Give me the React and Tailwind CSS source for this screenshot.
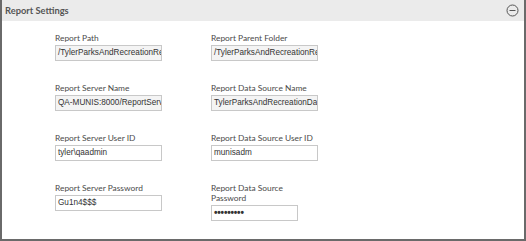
import React from "react";

const Field = ({ label, value, ro, w = "w-[107px]", pw }) => (
  <div className="flex flex-col">
    <div className="text-[8.4px] leading-[10px] text-[#4a4a4a] w-[104px]">{label}</div>
    <div
      className={`mt-[2px] h-[16px] ${w} border border-[#c8c8c8] overflow-hidden whitespace-nowrap px-[2px] text-[8.2px] leading-[14px] text-[#333] ${ro ? "bg-[#f4f4f4]" : "bg-white"}`}
      style={{ fontFamily: '"Liberation Sans", Arial, sans-serif' }}
    >
      {pw ? <span className="tracking-[-0.2px] text-[10px] font-bold">{value}</span> : value}
    </div>
  </div>
);

export default function App() {
  return (
    <div
      className="w-[526px] h-[241px] bg-white"
      style={{ fontFamily: 'Lato, "Open Sans", sans-serif' }}
    >
      <div className="w-[526px] h-[241px] border-l-[2px] border-r-[2px] border-b-[2px] border-[#6a6a6a] flex flex-col">
        <div className="h-[21px] bg-[#ebebeb] flex items-center justify-between pl-[3px] pr-[5px]">
          <span className="text-[9.3px] font-bold text-[#555]">Report Settings</span>
          <svg width="13" height="13" viewBox="0 0 13 13">
            <circle cx="6.5" cy="6.5" r="5.5" fill="none" stroke="#555" strokeWidth="1" />
            <line x1="3.5" y1="6.5" x2="9.5" y2="6.5" stroke="#555" strokeWidth="1" />
          </svg>
        </div>
        <div className="grid grid-cols-[156px_160px] gap-y-[22px] pl-[53px] pt-[12px]">
          <Field label="Report Path" value="/TylerParksAndRecreationReports" ro />
          <Field label="Report Parent Folder" value="/TylerParksAndRecreationReports" ro />
          <Field label="Report Server Name" value="QA-MUNIS:8000/ReportServer" ro />
          <Field label="Report Data Source Name" value="TylerParksAndRecreationDataSource" ro />
          <Field label="Report Server User ID" value={"tyler\\qaadmin"} />
          <Field label="Report Data Source User ID" value="munisadm" />
          <Field label="Report Server Password" value="Gu1n4$$$" />
          <Field label={"Report Data Source\nPassword"} value="•••••••••" w="w-[87px]" pw />
        </div>
      </div>
    </div>
  );
}
